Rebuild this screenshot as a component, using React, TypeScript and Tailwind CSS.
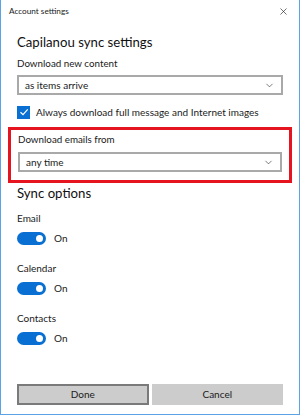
import { ChevronDown, X } from "lucide-react";

function Dropdown({ value }: { value: string }) {
    return (
        <div className="flex h-[20px] items-center justify-between border-2 border-[#a9a9a9] bg-white pl-[6px] pr-[6px]">
            <span className="text-[10px] text-[#1a1a1a]">{value}</span>
            <ChevronDown size={11} strokeWidth={1.4} className="text-[#333]" />
        </div>
    );
}

function Toggle({ label, className }: { label: string; className?: string }) {
    return (
        <div className={className}>
            <p className="h-[14px] text-[10px] leading-[14px] text-[#1a1a1a]">{label}</p>
            <div className="mt-[6px] flex h-[14px] items-center gap-[8px]">
                <div className="flex h-[13px] w-[29px] items-center justify-end rounded-full bg-[#0a6fd2] pr-[3px]">
                    <div className="h-[7px] w-[7px] rounded-full bg-white" />
                </div>
                <span className="text-[10px] text-[#1a1a1a]">On</span>
            </div>
        </div>
    );
}

export default function App() {
    return (
        <div
            className="flex h-[415px] w-[300px] flex-col border-x border-b border-[#5aa3e6] bg-white"
            style={{ fontFamily: "Lato, 'Open Sans', sans-serif" }}
        >
            <div className="flex h-[22px] items-center justify-between pl-[8px] pr-[10px]">
                <span className="text-[8.2px] text-[#1a1a1a]">Account settings</span>
                <X size={11} strokeWidth={1.4} className="text-[#222]" />
            </div>

            <div className="flex flex-1 flex-col px-[16px] pb-[9px]">
                <h1 className="mt-[10px] h-[20px] whitespace-nowrap text-[13.2px] leading-[20px] text-[#111]">
                    Capilanou sync settings
                </h1>

                <p className="mt-[4px] h-[14px] text-[9.8px] leading-[14px] text-[#1a1a1a]">Download new content</p>
                <div className="mt-[5px]">
                    <Dropdown value="as items arrive" />
                </div>

                <div className="mt-[10px] flex h-[14px] items-center gap-[6px]">
                    <div className="flex h-[13px] w-[13px] items-center justify-center bg-[#0a6fd2]">
                        <svg width="10" height="10" viewBox="0 0 10 10" fill="none">
                            <path d="M1.5 5.2 L4 7.6 L8.7 2.4" stroke="white" strokeWidth="1.2" />
                        </svg>
                    </div>
                    <span className="whitespace-nowrap text-[10px] text-[#1a1a1a]">
                        Always download full message and Internet images
                    </span>
                </div>

                <div className="-mx-[9px] mt-[8px] border-[3px] border-[#e5141e] px-[7px] pb-[8px] pt-[2px]">
                    <p className="h-[14px] text-[9.8px] leading-[14px] text-[#1a1a1a]">Download emails from</p>
                    <div className="mt-[6px]">
                        <Dropdown value="any time" />
                    </div>
                </div>

                <h2 className="h-[20px] text-[13.2px] leading-[20px] text-[#111]">Sync options</h2>

                <Toggle label="Email" className="mt-[8px]" />
                <Toggle label="Calendar" className="mt-[16px]" />
                <Toggle label="Contacts" className="mt-[16px]" />

                <div className="mt-auto flex gap-[3px]">
                    <button className="flex h-[21px] flex-1 items-center justify-center border-2 border-[#7a7a7a] bg-[#cccccc] text-[10px] text-[#1a1a1a]">
                        Done
                    </button>
                    <button className="flex h-[21px] flex-1 items-center justify-center border-2 border-[#cccccc] bg-[#cccccc] text-[10px] text-[#1a1a1a]">
                        Cancel
                    </button>
                </div>
            </div>
        </div>
    );
}
